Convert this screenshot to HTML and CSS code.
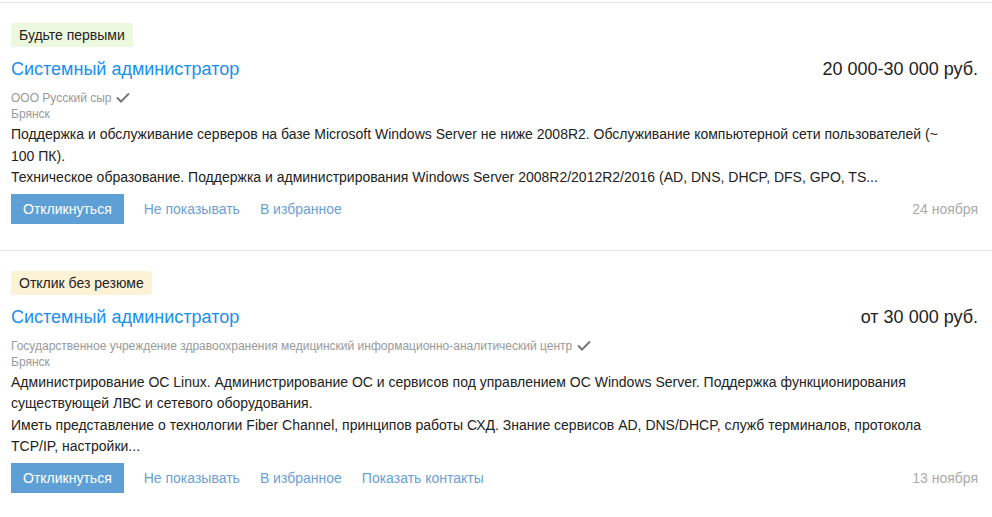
FILE: index.html
```html
<!DOCTYPE html>
<html>
<head>
    <title>Вакансии</title>
    <meta charset="UTF-8">
    <link rel="stylesheet" href="styles.css">
</head>
<body>
    <div class="list">

        <!-- Вакансия 1 -->
        <div class="vacancy">
            <span class="badge badge-green">Будьте первыми</span>
            <div class="head">
                <a class="title" href="#">Системный администратор</a>
                <span class="salary">20 000-30 000 руб.</span>
            </div>
            <div class="company">ООО Русский сыр
                <svg class="check" width="14" height="11" viewBox="0 0 14 11"><path d="M1 5.5l4 4L13 1.5" fill="none" stroke="#777" stroke-width="2"/></svg>
            </div>
            <div class="city">Брянск</div>
            <div class="desc">
                Поддержка и обслуживание серверов на базе Microsoft Windows Server не ниже 2008R2. Обслуживание компьютерной сети пользователей (~ 100 ПК).<br>
                Техническое образование. Поддержка и администрирования Windows Server 2008R2/2012R2/2016 (AD, DNS, DHCP, DFS, GPO, TS...
            </div>
            <div class="actions">
                <button class="respond">Откликнуться</button>
                <a class="link" href="#">Не показывать</a>
                <a class="link" href="#">В избранное</a>
                <span class="date">24 ноября</span>
            </div>
        </div>

        <!-- Вакансия 2 -->
        <div class="vacancy">
            <span class="badge badge-yellow">Отклик без резюме</span>
            <div class="head">
                <a class="title" href="#">Системный администратор</a>
                <span class="salary">от 30 000 руб.</span>
            </div>
            <div class="company">Государственное учреждение здравоохранения медицинский информационно-аналитический центр
                <svg class="check" width="14" height="11" viewBox="0 0 14 11"><path d="M1 5.5l4 4L13 1.5" fill="none" stroke="#777" stroke-width="2"/></svg>
            </div>
            <div class="city">Брянск</div>
            <div class="desc">
                Администрирование ОС Linux. Администрирование ОС и сервисов под управлением ОС Windows Server. Поддержка функционирования существующей ЛВС и сетевого оборудования.<br>
                Иметь представление о технологии Fiber Channel, принципов работы СХД. Знание сервисов AD, DNS/DHCP, служб терминалов, протокола TCP/IP, настройки...
            </div>
            <div class="actions">
                <button class="respond">Откликнуться</button>
                <a class="link" href="#">Не показывать</a>
                <a class="link" href="#">В избранное</a>
                <a class="link" href="#">Показать контакты</a>
                <span class="date">13 ноября</span>
            </div>
        </div>

    </div>
</body>
</html>
```

FILE: styles.css
```css
body {
    margin: 0;
    font-family: "Liberation Sans", Arial, sans-serif;
    color: #222;
    background-color: #fff;
}
.list {
    padding-top: 2px;
}
.vacancy {
    border-top: 1px solid #e6e6e6;
    padding: 20px 14px 26px 11px;
}
.badge {
    display: inline-block;
    font-size: 14px;
    line-height: 16px;
    padding: 4px 8px;
    border-radius: 3px;
    color: #222;
}
.badge-green {
    background-color: #edf9df;
}
.badge-yellow {
    background-color: #fcf2d6;
}
.head {
    display: flex;
    justify-content: space-between;
    align-items: baseline;
    margin-top: 10px;
    margin-bottom: 9px;
    line-height: 24px;
}
.title {
    font-size: 18px;
    color: #1790ee;
    text-decoration: none;
}
.salary {
    font-size: 18px;
    color: #222;
}
.company, .city {
    font-size: 12px;
    line-height: 16px;
    color: #999;
}
.check {
    vertical-align: -1px;
    margin-left: 1px;
}
.desc {
    max-width: 940px;
    margin-top: 2px;
    font-size: 14px;
    line-height: 21.5px;
    color: #222;
}
.actions {
    display: flex;
    align-items: center;
    gap: 20px;
    margin-top: 5px;
}
.respond {
    height: 30px;
    padding: 0 12px;
    border: none;
    background-color: #5e9fd6;
    color: #fff;
    font-family: inherit;
    font-size: 14px;
    cursor: pointer;
}
.link {
    font-size: 14px;
    color: #6a9fd6;
    text-decoration: none;
}
.date {
    margin-left: auto;
    font-size: 14px;
    color: #aaa;
}
```
